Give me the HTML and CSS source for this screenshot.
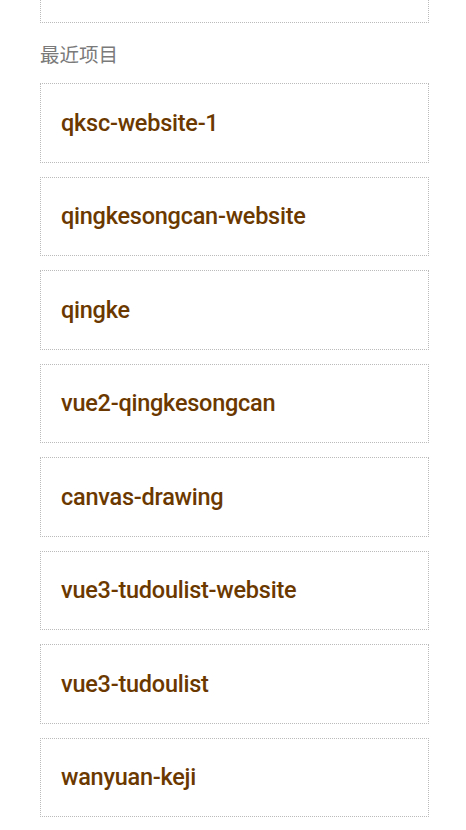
FILE: index.html
```html
<!DOCTYPE html>
<html lang="zh">
<head>
<meta charset="utf-8">
<title>最近项目</title>
<link rel="stylesheet" href="styles.css">
</head>
<body>
<div class="wrap">
  <div class="card card-top"></div>
  <h2 class="title">最近项目</h2>
  <ul class="list">
    <li class="card"><a class="name">qksc-website-1</a></li>
    <li class="card"><a class="name">qingkesongcan-website</a></li>
    <li class="card"><a class="name">qingke</a></li>
    <li class="card"><a class="name">vue2-qingkesongcan</a></li>
    <li class="card"><a class="name">canvas-drawing</a></li>
    <li class="card"><a class="name">vue3-tudoulist-website</a></li>
    <li class="card"><a class="name">vue3-tudoulist</a></li>
    <li class="card"><a class="name">wanyuan-keji</a></li>
  </ul>
</div>
</body>
</html>
```

FILE: styles.css
```css
html, body {
  margin: 0;
  padding: 0;
  background: #fff;
  overflow: hidden;
}
.wrap {
  width: 389px;
  margin-left: 40px;
}
.card {
  box-sizing: border-box;
  height: 79.5px;
  border: 1px dotted #bbb;
  display: flex;
  align-items: center;
  padding: 0 20px;
  margin-bottom: 14px;
}
.card-top {
  margin-top: -56.5px;
  margin-bottom: 0;
}
.title {
  margin: 19px 0 17px;
  font: 400 19.5px/24px "Noto Sans CJK SC", sans-serif;
  color: #7a7a7a;
}
.list {
  list-style: none;
  margin: 0;
  padding: 0;
}
.name {
  font-family: Roboto, sans-serif;
  font-weight: 500;
  font-size: 23.5px;
  letter-spacing: -0.25px;
  color: #6b3900;
  text-decoration: none;
}
```
